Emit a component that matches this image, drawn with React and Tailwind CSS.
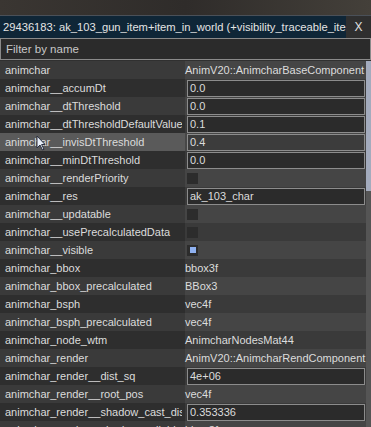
const rows = [
  { name: 'animchar', text: 'AnimV20::AnimcharBaseComponent' },
  { name: 'animchar__accumDt', input: '0.0' },
  { name: 'animchar__dtThreshold', input: '0.0' },
  { name: 'animchar__dtThresholdDefaultValue', input: '0.1' },
  { name: 'animchar__invisDtThreshold', input: '0.4', hover: true },
  { name: 'animchar__minDtThreshold', input: '0.0' },
  { name: 'animchar__renderPriority', check: false },
  { name: 'animchar__res', input: 'ak_103_char' },
  { name: 'animchar__updatable', check: false },
  { name: 'animchar__usePrecalculatedData', check: false },
  { name: 'animchar__visible', check: true },
  { name: 'animchar_bbox', text: 'bbox3f' },
  { name: 'animchar_bbox_precalculated', text: 'BBox3' },
  { name: 'animchar_bsph', text: 'vec4f' },
  { name: 'animchar_bsph_precalculated', text: 'vec4f' },
  { name: 'animchar_node_wtm', text: 'AnimcharNodesMat44' },
  { name: 'animchar_render', text: 'AnimV20::AnimcharRendComponent' },
  { name: 'animchar_render__dist_sq', input: '4e+06' },
  { name: 'animchar_render__root_pos', text: 'vec4f' },
  { name: 'animchar_render__shadow_cast_dist', input: '0.353336' },
  { name: 'animchar_render__shadow_cull_bbox', text: 'bbox3f' },
]

function Cursor() {
  return (
    <svg className="absolute left-[36px] top-[135px]" width="10" height="16" viewBox="0 0 10 16">
      <path d="M1 1 L1 13 L4 10 L6.5 15 L8 14.3 L5.6 9.5 L9 9.5 Z" fill="#e8eef8" stroke="#2a3040" strokeWidth="1" />
    </svg>
  )
}

function Row({ row, idx }) {
  const light = idx % 2 === 0
  const leftBg = row.hover ? 'bg-[#5a5a5a]' : light ? 'bg-[#3a3a3a]' : 'bg-[#2e2e2e]'
  const rightBg = row.hover ? 'bg-[#474747]' : light ? 'bg-[#454545]' : 'bg-[#3a3a3a]'

  return (
    <div className="flex h-[18px]">
      <div className={`w-[185px] shrink-0 pl-[5px] pr-[3px] leading-[18px] ${leftBg}`}>
        <div className="overflow-hidden whitespace-nowrap">{row.name}</div>
      </div>
      <div className={`flex-1 flex items-center pr-[1px] ${rightBg}`}>
        {row.text && <span className="whitespace-nowrap">{row.text}</span>}
        {row.input && (
          <div className={`ml-[2px] w-full h-[17px] border border-[#8c8c8c] pl-[2px] leading-[15px] ${row.hover ? 'bg-[#3c3c3c]' : 'bg-[#2b2b2b]'}`}>
            {row.input}
          </div>
        )}
        {row.check !== undefined && (
          <div className="ml-[2px] w-[11px] h-[11px] bg-[#2c2c2c] flex items-center justify-center">
            {row.check && <div className="w-[6px] h-[6px] bg-[#8fb1f0]" />}
          </div>
        )}
      </div>
    </div>
  )
}

export default function App() {
  return (
    <div className="relative w-[371px] h-[427px] overflow-hidden bg-[#303030] text-[11px] text-[#dcdcdc] font-['Liberation_Sans',sans-serif]">
      <div className="h-[15px] bg-gradient-to-r from-[#3a3632] via-[#2f2c2a] to-[#44403a]" />
      <div className="flex h-[23px] border-t border-[#4a5058]">
        <div className="w-[346px] bg-[#0f2637] pl-[3px] text-[11.2px] leading-[22px] whitespace-nowrap overflow-hidden text-[#e4e4e4]">
          29436183: ak_103_gun_item+item_in_world (+visibility_traceable_item)
        </div>
        <div className="flex-1 bg-[#2f2f2f] text-center text-[12px] leading-[22px] text-[#e0e0e0]">X</div>
      </div>
      <div className="h-[22px] border border-[#8a8a8a] bg-[#2b2b2b] pl-[5px] leading-[20px] text-[11.5px] text-[#c8c8c8]">
        Filter by name
      </div>
      <div className="flex mt-[1px]">
        <div className="flex-1 flex flex-col">
          {rows.map((r, i) => <Row key={r.name} row={r} idx={i} />)}
        </div>
        <div className="w-[8px] flex flex-col bg-[#555555]">
          <div className="h-[130px] bg-[#a3abbd]" />
        </div>
      </div>
      <Cursor />
    </div>
  )
}
